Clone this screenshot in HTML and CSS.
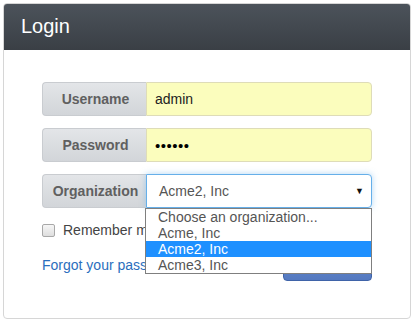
FILE: index.html
```html
<!DOCTYPE html>
<html>
<head>
<meta charset="utf-8">
<link rel="stylesheet" href="styles.css">
</head>
<body>
<div class="panel">
  <div class="panel-head">Login</div>
  <div class="panel-body">
    <div class="group">
      <div class="addon">Username</div>
      <div class="field filled">admin</div>
    </div>
    <div class="group">
      <div class="addon">Password</div>
      <div class="field filled dots">&#8226;&#8226;&#8226;&#8226;&#8226;&#8226;</div>
    </div>
    <div class="group select-group">
      <div class="addon">Organization</div>
      <div class="field select">Acme2, Inc<span class="caret">&#9660;</span></div>
      <ul class="options">
        <li>Choose an organization...</li>
        <li>Acme, Inc</li>
        <li class="active">Acme2, Inc</li>
        <li>Acme3, Inc</li>
      </ul>
    </div>
    <div class="check-row"><span class="box"></span>Remember me</div>
    <div class="action-row">
      <a class="forgot">Forgot your password?</a>
      <button class="btn">Log in</button>
    </div>
  </div>
</div>
</body>
</html>
```
FILE: styles.css
```css
html, body { margin: 0; padding: 0; background: #fff; }
body { padding: 3px 4px 0 3px; font-family: "Liberation Sans", Arial, sans-serif; }
.panel {
  border: 1px solid #d6d6d6;
  border-radius: 4px;
  height: 316px;
  box-sizing: border-box;
  overflow: hidden;
}
.panel-head {
  height: 47px;
  margin: -1px -1px 0 -1px;
  border-radius: 4px 4px 0 0;
  background: linear-gradient(#4c535b, #3a3f45);
  color: #fff;
  font-size: 20px;
  line-height: 47px;
  padding-left: 18px;
}
.panel-body { padding: 32px 38px 0 38px; }
.group {
  display: flex;
  height: 34px;
  margin-bottom: 12px;
  border-radius: 4px;
  position: relative;
}
.addon {
  width: 104px;
  flex: none;
  background: linear-gradient(#e3e5e8, #d2d5d9);
  border: 1px solid #c9ccd0;
  border-right: none;
  border-radius: 4px 0 0 4px;
  color: #606060;
  font-weight: bold;
  font-size: 14px;
  display: flex;
  align-items: center;
  justify-content: center;
  box-sizing: border-box;
  padding-left: 2px;
}
.field {
  flex: 1;
  border: 1px solid #d4d4b0;
  border-radius: 0 4px 4px 0;
  box-sizing: border-box;
  font-size: 14px;
  color: #222;
  display: flex;
  align-items: center;
  padding-left: 8px;
}
.filled { background: #fbfdbd; border-color: #dedcb8; }
.dots { font-size: 15px; letter-spacing: 0.5px; color: #000; }
.select {
  background: #fff;
  border-color: #66afe9;
  box-shadow: 0 0 6px rgba(102,175,233,.5);
  color: #555;
  position: relative;
  padding-left: 12px;
}
.caret {
  position: absolute;
  right: 7px;
  top: 11px;
  font-size: 9px;
  color: #111;
}
.options {
  position: absolute;
  left: 103px;
  top: 34px;
  width: 227px;
  margin: 0;
  padding: 0;
  list-style: none;
  background: #fff;
  border: 1px solid #7f7f7f;
  box-sizing: border-box;
  z-index: 2;
  font-size: 14px;
  color: #555;
}
.options li { height: 16px; line-height: 16px; padding-left: 12px; }
.options li.active { background: #1e90ff; color: #fff; }
.check-row {
  display: flex;
  align-items: center;
  font-size: 14px;
  color: #444;
  margin-top: 1px;
  height: 20px;
}
.box {
  width: 11px;
  height: 11px;
  border: 1px solid #a8a8a8;
  border-radius: 2px;
  background: linear-gradient(#f6f6f6, #dedede);
  margin-right: 8px;
}
.action-row {
  display: flex;
  justify-content: space-between;
  align-items: center;
  margin-top: 8px;
  height: 33px;
}
.forgot { color: #2a6ebd; font-size: 14px; }
.btn {
  width: 89px;
  height: 33px;
  background: linear-gradient(#6b8fd0, #5479c0);
  border: 1px solid #3f63a8;
  border-radius: 4px;
  color: #fff;
  font-size: 14px;
  font-family: inherit;
}
```
